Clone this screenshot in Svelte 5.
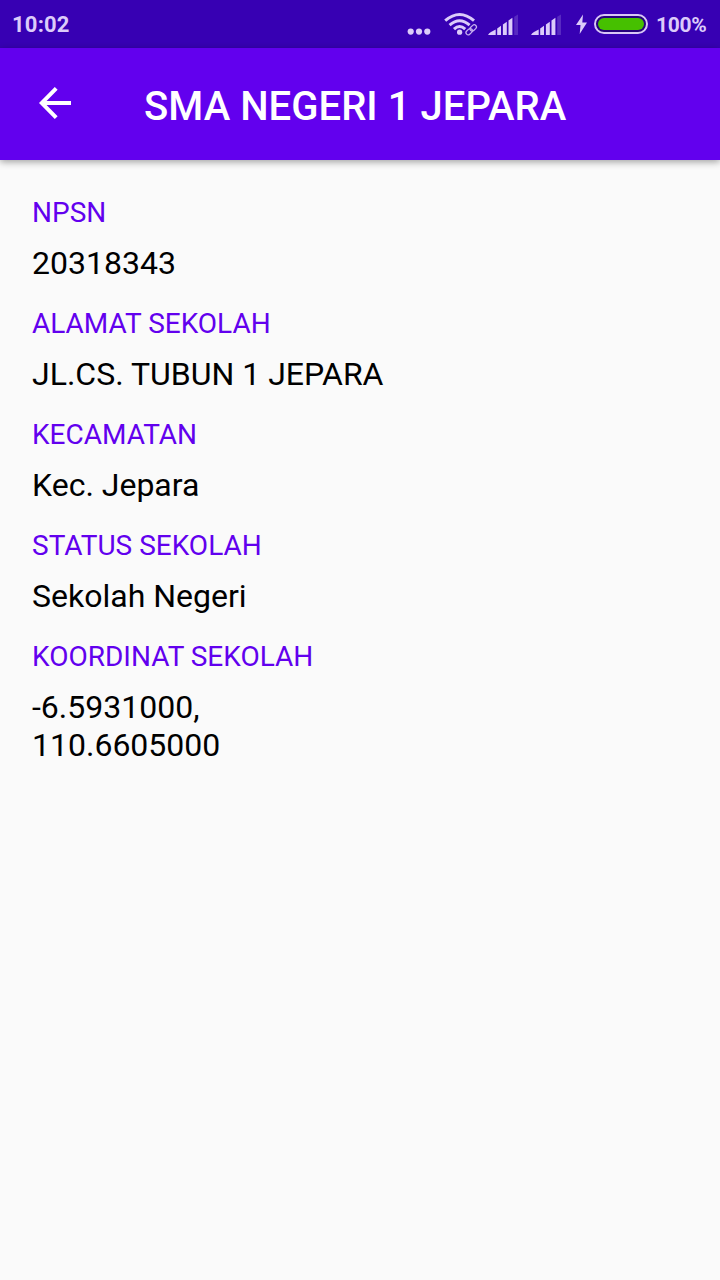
<script>
  const fields = [
    { label: 'NPSN', value: '20318343' },
    { label: 'ALAMAT SEKOLAH', value: 'JL.CS. TUBUN 1 JEPARA' },
    { label: 'KECAMATAN', value: 'Kec. Jepara' },
    { label: 'STATUS SEKOLAH', value: 'Sekolah Negeri' },
    { label: 'KOORDINAT SEKOLAH', value: '-6.5931000,\n110.6605000' }
  ];
</script>

{#snippet signal()}
  <svg class="signal" width="30" height="48" viewBox="0 0 30 48">
    <path d="M0 35 Q1 33.2 3 32 L7.7 29.6 V35Z M9.2 28.4 L13 25.8 V35 H9.2Z M14.9 24.6 L18.8 21.8 V35 H14.9Z M20.5 20.6 L24.4 17.8 V35 H20.5Z" />
    <path opacity=".2" d="M26.2 16.8 L30 14.5 V35 H26.2Z" />
  </svg>
{/snippet}

<div class="screen">
  <div class="status">
    <span class="time">10:02</span>
    <div class="indicators">
      <svg class="dots" width="24" height="48" viewBox="0 0 24 48">
        <circle cx="3.7" cy="31.6" r="3.1" /><circle cx="12" cy="31.6" r="3.1" /><circle cx="20.3" cy="31.6" r="3.1" />
      </svg>
      <svg class="wifi" width="34" height="48" viewBox="0 0 34 48">
        <circle cx="15.6" cy="32.2" r="2.6" />
        <g fill="none" stroke="currentColor" stroke-width="3">
          <path d="M1.2 20.7 Q15.6 8.2 30 20.7" />
          <path d="M5.6 25.2 Q15.6 16.4 25.6 25.2" />
          <path d="M10 29.2 Q15.6 23.8 21.2 29.2" />
        </g>
        <g transform="translate(27.2 29.8) rotate(-43)" fill="none">
          <g stroke="#3700b3" stroke-width="3.6">
            <rect x="-6.3" y="-2.2" width="7" height="4.4" rx="2.2" /><rect x="-.7" y="-2.2" width="7" height="4.4" rx="2.2" />
          </g>
          <g stroke="#c6aeef" stroke-width="1.3">
            <rect x="-6.3" y="-2.2" width="7.1" height="4.4" rx="2.2" /><rect x="-.8" y="-2.2" width="7.1" height="4.4" rx="2.2" />
          </g>
        </g>
      </svg>
      {@render signal()}
      {@render signal()}
      <svg class="bolt" width="11" height="48" viewBox="0 0 11 48">
        <path d="M7 14.5 L0 25 H4.5 L3.7 34 L11 22.4 H6.3Z" />
      </svg>
      <span class="battery"><span class="charge"></span></span>
      <span class="percent">100%</span>
    </div>
  </div>

  <header>
    <svg width="32" height="32" viewBox="0 0 32 32" fill="none" stroke="#fff" stroke-width="4">
      <path d="M32 16 H4 M17.2 1.4 L2.7 16 L17.2 30.6" />
    </svg>
    <h1>SMA NEGERI 1 JEPARA</h1>
  </header>

  <main>
    {#each fields as field}
      <section>
        <div class="label">{field.label}</div>
        <div class="value">{field.value}</div>
      </section>
    {/each}
  </main>
</div>

<style>
  :global(body) { margin: 0; background: #fafafa; }
  .screen {
    width: 720px;
    height: 1280px;
    overflow: hidden;
    background: #fafafa;
    font-family: Roboto, sans-serif;
    display: flex;
    flex-direction: column;
  }
  .status {
    height: 48px;
    flex: none;
    background: #3700b3;
    color: #dccbfa;
    display: flex;
    justify-content: space-between;
    padding: 0 0 0 12px;
    font-size: 22px;
    font-weight: 700;
    line-height: 50px;
    box-sizing: border-box;
  }
  .time { letter-spacing: .2px; }
  .status svg { display: block; fill: currentColor; flex: none; }
  .indicators { display: flex; }
  .dots { margin-right: 13px; }
  .wifi { margin-right: 10px; }
  .signal { margin-right: 13px; }
  .bolt { margin: 0 7px 0 2px; }
  .battery {
    box-sizing: border-box;
    width: 54px;
    height: 20px;
    margin: 14px 8px 0 0;
    border: 2px solid #d8c7f6;
    border-radius: 10px;
    padding: 2px;
    background: #26007e;
    display: flex;
  }
  .charge { flex: 1; border-radius: 6px; background: #46c000; }
  .percent { width: 64px; font-size: 21px; letter-spacing: -.3px; }
  header {
    height: 112px;
    flex: none;
    box-sizing: border-box;
    background: #6200ee;
    box-shadow: 0 2px 7px rgba(0, 0, 0, .36);
    display: flex;
    align-items: center;
    padding: 0 0 2px 39px;
    gap: 73px;
  }
  h1 { margin: 8px 0 0; color: #fff; font-size: 40px; font-weight: 500; line-height: 48px; letter-spacing: .04px; white-space: nowrap; }
  main { padding: 36px 32px 0; display: flex; flex-direction: column; gap: 25px; }
  section { display: flex; flex-direction: column; gap: 15px; }
  .label { color: #6200ee; font-size: 28px; line-height: 33px; }
  .value { color: #000; font-size: 32px; line-height: 38px; white-space: pre-line; }
</style>
